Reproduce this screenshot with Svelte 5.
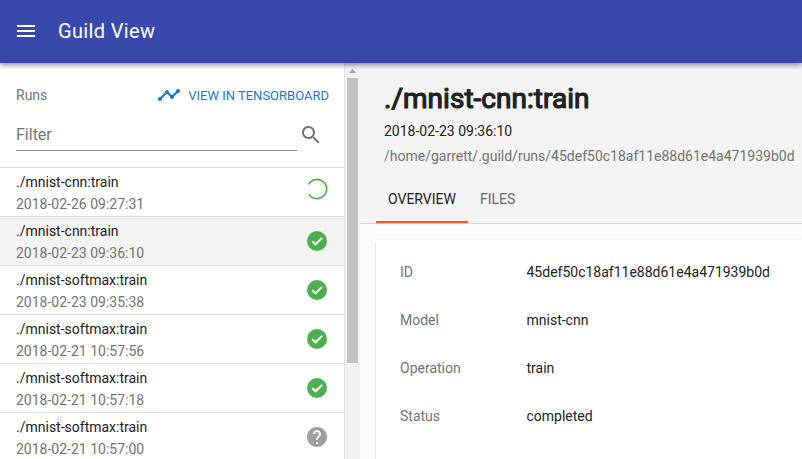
<script>
  const runs = [
    { name: './mnist-cnn:train', time: '2018-02-26 09:27:31', status: 'running' },
    { name: './mnist-cnn:train', time: '2018-02-23 09:36:10', status: 'completed', selected: true },
    { name: './mnist-softmax:train', time: '2018-02-23 09:35:38', status: 'completed' },
    { name: './mnist-softmax:train', time: '2018-02-21 10:57:56', status: 'completed' },
    { name: './mnist-softmax:train', time: '2018-02-21 10:57:18', status: 'completed' },
    { name: './mnist-softmax:train', time: '2018-02-21 10:57:00', status: 'unknown' }
  ];
  const details = [
    ['ID', '45def50c18af11e88d61e4a471939b0d'],
    ['Model', 'mnist-cnn'],
    ['Operation', 'train'],
    ['Status', 'completed']
  ];
</script>

<div class="app">
  <header>
    <svg class="menu" viewBox="0 0 24 24"><path d="M3 18h18v-2H3v2zm0-5h18v-2H3v2zm0-7v2h18V6H3z" /></svg>
    <span class="brand">Guild View</span>
  </header>
  <div class="body">
    <aside>
      <div class="tools">
        <span class="runs-label">Runs</span>
        <a class="tb" href="#tensorboard">
          <svg viewBox="0 0 24 24"><path d="M23 8c0 1.100-.9 2-2 2-.18 0-.35-.02-.51-.07l-3.560 3.550c.05.16.07.34.07.52 0 1.100-.9 2-2 2s-2-.9-2-2c0-.18.02-.36.07-.52l-2.550-2.550c-.16.05-.34.07-.52.07s-.36-.02-.52-.07l-4.550 4.560c.05.16.07.33.07.51 0 1.100-.9 2-2 2s-2-.9-2-2 .9-2 2-2c.18 0 .35.02.51.07l4.560-4.550C8.020 9.360 8 9.180 8 9c0-1.100.9-2 2-2s2 .9 2 2c0 .18-.02.36-.07.52l2.550 2.550c.16-.05.34-.07.52-.07s.36.02.52.07l3.550-3.560C19.020 8.350 19 8.180 19 8c0-1.100.9-2 2-2s2 .9 2 2z" /></svg>
          <span class="tb-label">VIEW IN TENSORBOARD</span>
        </a>
      </div>
      <div class="filter">
        <input placeholder="Filter" aria-label="Filter" />
        <svg viewBox="0 0 24 24"><path d="M15.500 14h-.79l-.28-.27C15.410 12.590 16 11.110 16 9.500 16 5.910 13.090 3 9.500 3S3 5.910 3 9.500 5.910 16 9.500 16c1.610 0 3.090-.59 4.230-1.570l.27.28v.79l5 4.990L20.490 19l-4.990-5zm-6 0C7.010 14 5 11.990 5 9.500S7.010 5 9.500 5 14 7.010 14 9.500 11.990 14 9.500 14z" /></svg>
      </div>
      <div class="list">
        {#each runs as run}
          <div class="run" class:selected={run.selected}>
            <div class="info">
              <span>{run.name}</span>
              <span class="time">{run.time}</span>
            </div>
            {#if run.status === 'running'}
              <svg class="spinner" viewBox="0 0 24 24"><path d="M3.700 7.300A9.600 9.600 0 1 1 3.900 17.100" /></svg>
            {:else if run.status === 'completed'}
              <svg class="ok" viewBox="0 0 24 24"><circle cx="12" cy="12" r="10" /><path class="tick" d="M7.300 12.200l3.200 3.100 6.600-6.400" /></svg>
            {:else}
              <svg class="unknown" viewBox="0 0 24 24"><path d="M12 2C6.480 2 2 6.480 2 12s4.480 10 10 10 10-4.480 10-10S17.520 2 12 2zm1 17h-2v-2h2v2zm2.070-7.750l-.9.92C13.450 12.900 13 13.500 13 15h-2v-.5c0-1.100.45-2.100 1.170-2.830l1.240-1.260c.37-.36.59-.86.59-1.410 0-1.100-.9-2-2-2s-2 .9-2 2H8c0-2.210 1.790-4 4-4s4 1.790 4 4c0 .88-.36 1.680-.93 2.250z" /></svg>
            {/if}
          </div>
        {/each}
      </div>
    </aside>
    <div class="scroll">
      <svg viewBox="0 0 15 15"><path d="M4 10l3.500-4 3.500 4z" /></svg>
      <div class="thumb"></div>
    </div>
    <main>
      <div class="head">
        <h1>./mnist-cnn:train</h1>
        <div class="started">2018-02-23 09:36:10</div>
        <div class="path">/home/garrett/.guild/runs/45def50c18af11e88d61e4a471939b0d</div>
        <nav>
          <span class="tab active">OVERVIEW</span>
          <span class="tab">FILES</span>
        </nav>
      </div>
      <section class="card">
        {#each details as [label, value]}
          <div class="detail"><span class="label">{label}</span><span>{value}</span></div>
        {/each}
      </section>
    </main>
  </div>
</div>

<style>
  :global(body) { margin: 0; overflow: hidden; }
  .app {
    display: flex;
    flex-direction: column;
    height: 459px;
    overflow: hidden;
    background: #fafafa;
    color: #212121;
    font: 14px/20px Roboto, sans-serif;
  }
  * { box-sizing: border-box; }
  svg { display: block; flex: none; width: 24px; height: 24px; fill: currentColor; }
  header {
    display: flex;
    align-items: center;
    flex: none;
    height: 63px;
    padding: 0 14px 1px;
    gap: 20px;
    background: #3949ab;
    color: #fff;
    box-shadow: 0 2px 5px rgba(0, 0, 0, 0.45);
    z-index: 1;
  }
  .brand { font-size: 20px; letter-spacing: 0.35px; }
  .body { display: flex; flex: 1; min-height: 0; }
  aside {
    flex: none;
    width: 345px;
    overflow: hidden;
    background: #fff;
    border-right: 1px solid #e0e0e0;
  }
  .tools {
    display: flex;
    justify-content: space-between;
    align-items: center;
    height: 56px;
    padding: 8px 15px 0 16px;
  }
  .runs-label { color: #737373; }
  .tb {
    display: flex;
    align-items: center;
    gap: 7px;
    color: #1976d2;
    font-size: 13px;
    text-decoration: none;
  }
  .tb-label { padding-top: 2px; }
  .filter { display: flex; height: 48px; padding-left: 16px; color: #737373; }
  input {
    width: 281px;
    height: 32px;
    padding: 0;
    border: 0;
    border-bottom: 1px solid #8c8c8c;
    background: none;
    font: 16px Roboto, sans-serif;
    outline: 0;
  }
  input::placeholder { color: #737373; opacity: 1; }
  .filter svg { margin: 4px 0 0 2px; }
  .run {
    display: flex;
    justify-content: space-between;
    height: 49px;
    padding: 4px 15px 0 16px;
    border-top: 1px solid #dcdcdc;
  }
  .selected { background: #f4f4f4; }
  .info { display: flex; flex-direction: column; gap: 2px; }
  .time, .label, .path { color: #737373; }
  .spinner { margin-top: 5px; fill: none; stroke: #4caf50; stroke-width: 1.700; }
  .ok, .unknown { margin-top: 8px; }
  .ok { color: #4caf50; }
  .tick { fill: none; stroke: #fff; stroke-width: 2; }
  .unknown { color: #9e9e9e; }
  .scroll { flex: none; width: 15px; background: #f1f1f1; color: #a3a3a3; }
  .scroll svg { width: 15px; height: 15px; }
  .thumb { width: 11px; height: 285px; margin-left: 2px; background: #c1c1c1; }
  main { flex: 1; min-width: 0; }
  .head {
    height: 161px;
    padding: 20px 0 0 24px;
    background: #f4f4f4;
    border-bottom: 1px solid #d6d6d6;
    white-space: nowrap;
  }
  h1 {
    margin: 0;
    font-size: 28px;
    line-height: 32px;
    font-weight: 400;
    letter-spacing: 0.03px;
    -webkit-text-stroke: 1.200px #212121;
  }
  .started { margin-top: 6px; }
  .path { margin-top: 5px; }
  nav { display: flex; margin: 9px 0 0 -8px; }
  .tab { height: 48px; padding: 0 12px; line-height: 48px; color: #686868; }
  .tab.active { color: #212121; border-bottom: 2px solid #ff5722; }
  .card {
    height: 300px;
    margin: 16px 0 0 16px;
    padding: 8px 24px;
    background: #fff;
    box-shadow: 0 1px 2px rgba(0, 0, 0, 0.22);
  }
  .detail { display: flex; align-items: center; height: 48px; }
  .label { width: 126.500px; }
</style>
